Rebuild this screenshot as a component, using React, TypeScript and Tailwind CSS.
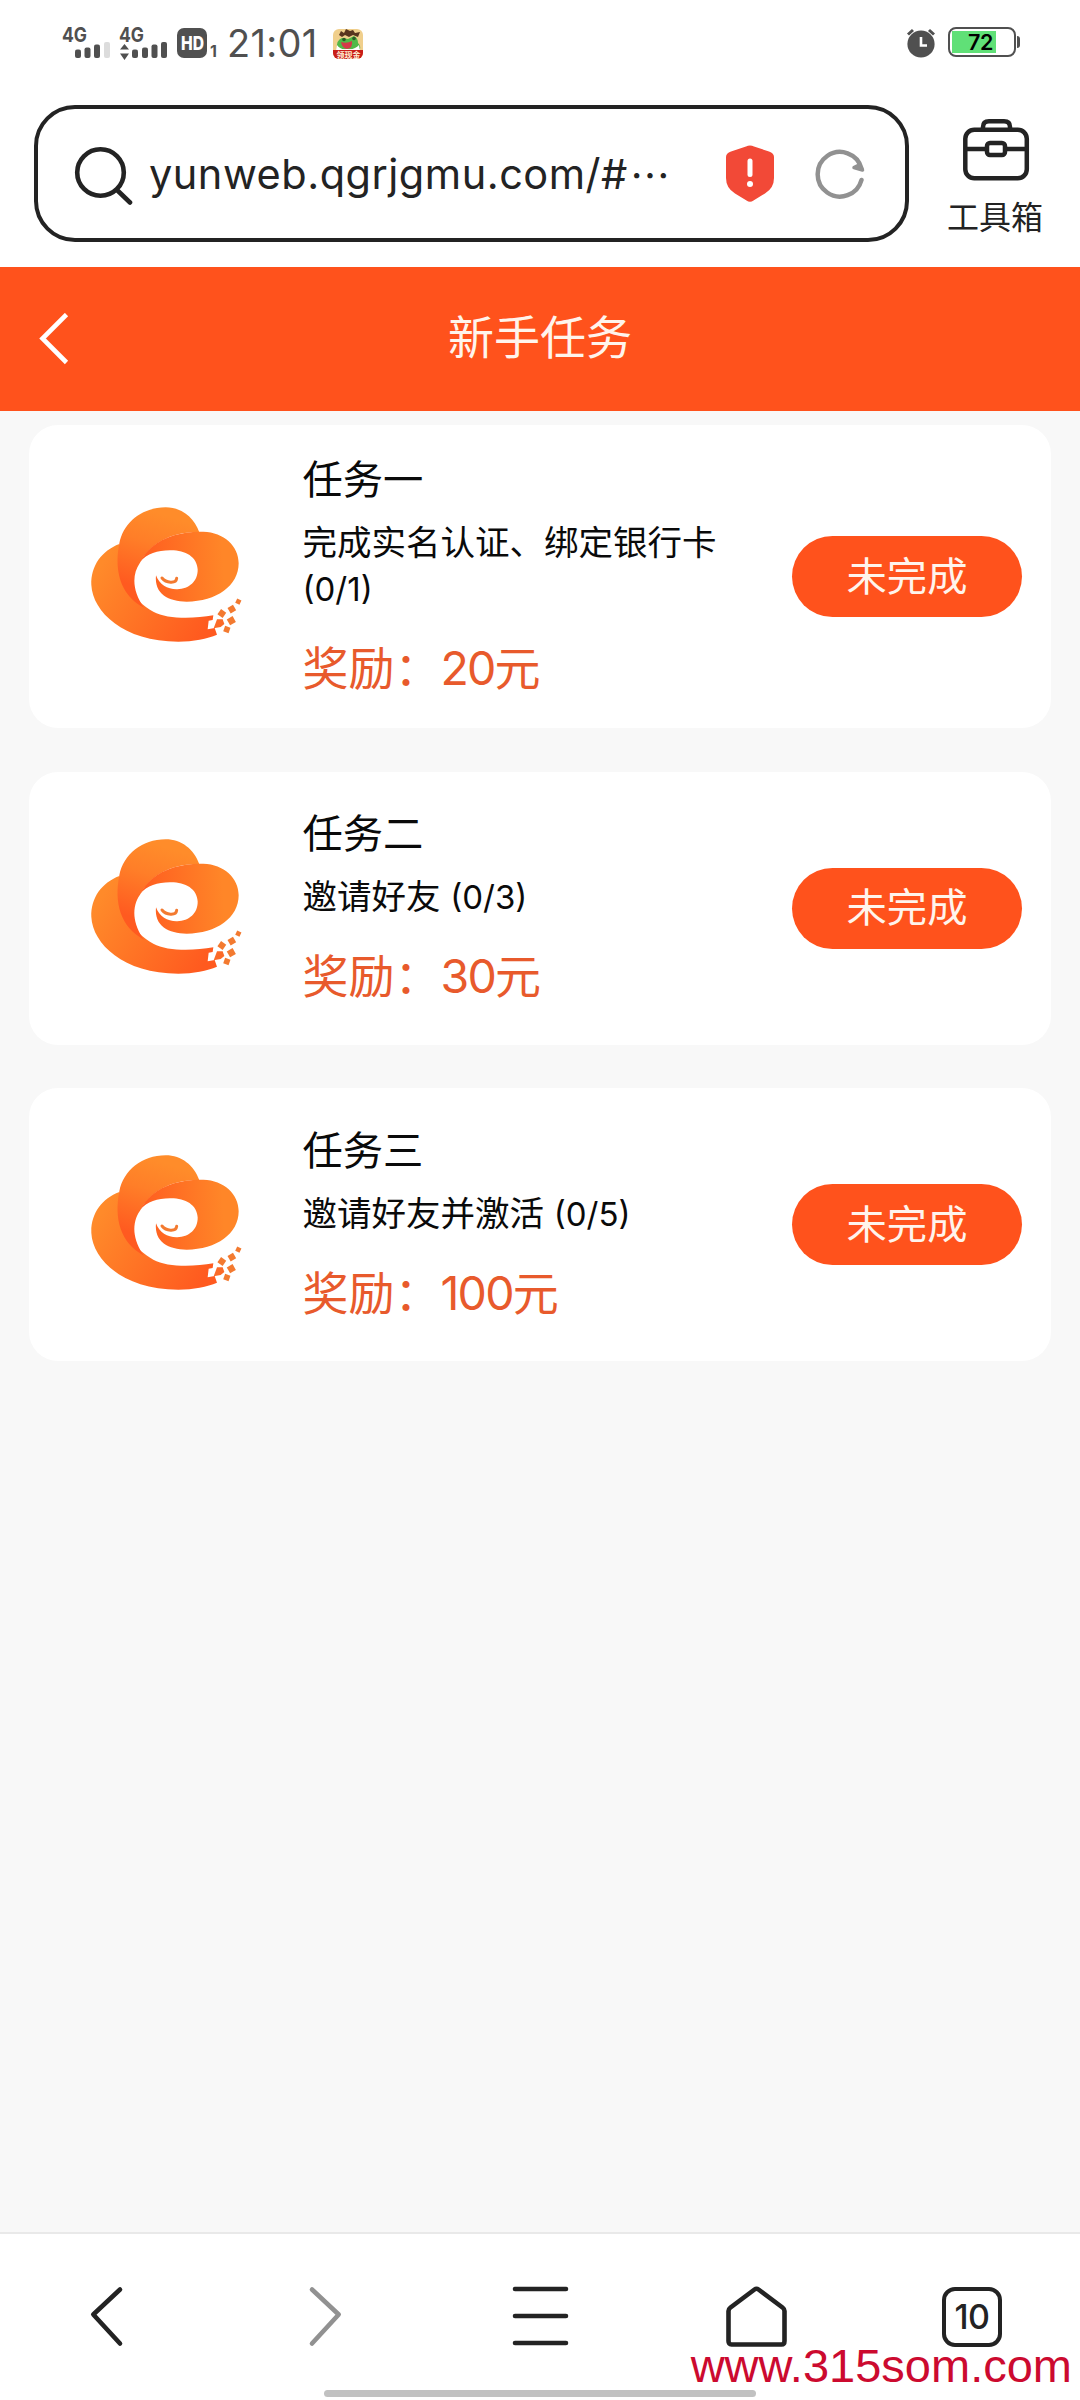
import React from "react";

const CJK = "font-['Inter','Noto_Sans_CJK_SC',sans-serif]";

function Logo() {
  return (
    <svg viewBox="0 0 570 510" className="h-[170px] w-[190px] shrink-0" aria-hidden="true">
      <defs>
        <linearGradient id="swoosh" gradientUnits="userSpaceOnUse" x1="90" y1="230" x2="400" y2="430">
          <stop offset="0" stopColor="#ff8a2a" />
          <stop offset="1" stopColor="#ff5a1f" />
        </linearGradient>
        <linearGradient id="top" gradientUnits="userSpaceOnUse" x1="270" y1="70" x2="200" y2="290">
          <stop offset="0" stopColor="#ff8c2a" />
          <stop offset="0.4" stopColor="#ff7e28" />
          <stop offset="1" stopColor="#ff5a20" />
        </linearGradient>
        <linearGradient id="right" gradientUnits="userSpaceOnUse" x1="230" y1="230" x2="460" y2="215">
          <stop offset="0" stopColor="#ff5f20" />
          <stop offset="1" stopColor="#ff8628" />
        </linearGradient>
      </defs>
      <path fill="url(#swoosh)" d="M148 162C95 182 62 228 64 285C68 365 160 455 325 455C370 455 412 446 441 434L434 414L413 418L416 392L428 390L430 376C370 386 292 388 250 365C190 330 140 270 148 162Z" />
      <path fill="url(#top)" d="M148 160C160 98 215 52 287 52C335 52 372 82 388 127C310 124 245 155 210 218C184 255 188 305 222 353C150 315 132 240 148 160Z" />
      <path fill="url(#right)" d="M210 216C248 148 315 125 400 125C462 127 506 168 506 220C506 287 440 335 350 335C296 335 252 312 258 256C268 284 294 299 322 298C357 297 384 274 383 238C381 200 345 180 300 181C262 182 232 190 210 216Z" />
      <path fill="none" stroke="#f37a30" strokeWidth="9" strokeLinecap="round" d="M276 264C288 279 318 282 320 265" />
      <g fill="#f37a30">
        <rect x="446" y="361" width="19" height="19" transform="rotate(35 455.500 370.500)" />
        <rect x="476" y="348" width="19" height="19" transform="rotate(-30 485.500 357.500)" />
        <rect x="498" y="328" width="14" height="14" transform="rotate(25 505 335)" />
        <rect x="474" y="382" width="20" height="20" transform="rotate(-30 484 392)" />
        <rect x="462" y="410" width="17" height="17" transform="rotate(20 470.500 418.500)" />
        <path fill="#fb6a28" d="M441 388L458 388L463 402L452 411L431 415Z" />
      </g>
    </svg>
  );
}

type Task = { title: string; desc: string; progress: string; reward: string; height: string };

const tasks: Task[] = [
  { title: "任务一", desc: "完成实名认证、绑定银行卡", progress: "(0/1)", reward: "20", height: "h-[303px]" },
  { title: "任务二", desc: "邀请好友", progress: "(0/3)", reward: "30", height: "h-[273px]" },
  { title: "任务三", desc: "邀请好友并激活", progress: "(0/5)", reward: "100", height: "h-[273px]" },
];

function TaskCard({ title, desc, progress, reward, height }: Task) {
  return (
    <section className={`flex items-center rounded-[29px] bg-white pr-[29px] pl-[41px] ${height}`}>
      <div className="-mt-[3px]">
        <Logo />
      </div>
      <div className="-mt-[3px] ml-[42.500px] flex w-[430px] flex-col">
        <h2 className="mt-px text-[40.3px] leading-[54px] text-[#0a0a0a]">{title}</h2>
        <p className="mt-[13px] text-[34.5px] leading-[46px] text-[#0a0a0a]">
          {desc} <span className="text-[33px]">{progress}</span>
        </p>
        <p className="mt-[25px] text-[46px] leading-[62px] text-[#e85a2c]">
          奖励：<span className="text-[46.500px] tracking-[-1.8px]">{reward}</span>元
        </p>
      </div>
      <button className="ml-auto h-[81px] w-[230px] rounded-full bg-[#ff521c] text-[40.3px] leading-[80px] text-[#fff4ec]">
        未完成
      </button>
    </section>
  );
}

function StatusBar() {
  return (
    <div className="flex h-[105px] justify-between pr-[60px] pl-[62px] text-[#505050]">
      <div className="flex">
        <svg viewBox="-1 0 150 60" className="mt-[15px] h-[60px] w-[150px]">
          <g fill="#505050" fontFamily="Inter" fontWeight="700" fontSize="20">
            <text x="-1" y="27" textLength="25" lengthAdjust="spacingAndGlyphs">4G</text>
            <text x="56" y="27" textLength="25" lengthAdjust="spacingAndGlyphs">4G</text>
            <rect x="12" y="34.500" width="6" height="8.500" rx="2" />
            <rect x="21.500" y="32.500" width="6" height="10.500" rx="2" />
            <rect x="31" y="29.500" width="6" height="13.500" rx="2" />
            <rect x="41" y="27" width="6" height="16" rx="2" fill="#dcdcdc" />
            <path d="M57 34.500L61.500 29L66 34.500ZM57 38.500L61.500 45L66 38.500Z" />
            <rect x="69" y="34.500" width="6" height="8.500" rx="2" />
            <rect x="79" y="32.500" width="6" height="10.500" rx="2" />
            <rect x="88.500" y="29.500" width="6" height="13.500" rx="2" />
            <rect x="98" y="27" width="6" height="16" rx="2" />
            <rect x="114" y="13" width="30" height="30" rx="7" />
          </g>
          <text x="118" y="35" fill="#fff" fontFamily="Inter" fontWeight="800" fontSize="19" textLength="23" lengthAdjust="spacingAndGlyphs">HD</text>
        </svg>
        <span className="mt-[41px] -ml-[2px] w-[16px] font-['Inter'] text-[16px] leading-[20px] font-bold">1</span>
        <span className="mt-[20px] ml-px font-['Inter'] text-[38px] leading-[46px] tracking-[0.3px]">21:01</span>
      </div>
      <div className="mt-[27px] mr-auto ml-[15px]">
        <svg viewBox="0 0 30 30" className="mt-[2px] h-[30px] w-[30px]">
          <clipPath id="app"><rect width="30" height="30" rx="6" /></clipPath>
          <g clipPath="url(#app)">
            <rect width="30" height="30" fill="#f0cf8c" />
            <path d="M4 20Q3 11 9 9L15 10L21 7Q25 9 25 14Q28 17 27 20Z" fill="#52b947" />
            <path d="M6 6L8 2L11 4L13 0L17 2L20 1L22 4L27 3L25 8L20 6L16 8L12 6L9 8Z" fill="#59351f" />
            <circle cx="11" cy="10.500" r="1.800" fill="#2c5c28" />
            <circle cx="21" cy="9.500" r="1.800" fill="#2c5c28" />
            <path d="M4 16Q7 21 14 20Q22 21 26 16L27 22H3Z" fill="#fff" />
            <path d="M8 13Q14 15 19 12Q20 19 14 20Q9 19 8 13Z" fill="#d43a48" />
            <rect y="21" width="30" height="9" fill="#c91d18" />
            <text x="3.500" y="28.500" fontSize="8" fontWeight="700" fill="#fff3d8" fontFamily="Noto Sans CJK SC">领现金</text>
          </g>
        </svg>
      </div>
      <div className="flex">
        <svg viewBox="0 0 30 32" className="mt-[28px] h-[32px] w-[30px]">
          <circle cx="15" cy="16" r="13.600" fill="#505050" />
          <path d="M2 6.500L7 2M28 6.500L23 2" stroke="#505050" strokeWidth="3" />
          <path d="M15 9V17.500H21" stroke="#fff" strokeWidth="2.600" fill="none" />
        </svg>
        <div className="mt-[27px] ml-[12px] flex h-[30px] w-[68px] rounded-[8px] border-2 border-[#505050] p-[2px]">
          <div className="h-[22px] w-[44px] bg-[#60e077] pl-[16px] font-['Inter'] text-[21.500px] leading-[22px] font-semibold tracking-[-0.5px] text-black">
            72
          </div>
        </div>
        <div className="mt-[36px] ml-px h-[12px] w-[3px] rounded-r-sm bg-[#505050]" />
      </div>
    </div>
  );
}

function AddressBar() {
  return (
    <div className="flex h-[162px] pl-[34px]">
      <div className="flex h-[137px] w-[875px] items-center rounded-[41px] border-[4.500px] border-[#232323] pl-[36px] text-[#232323]">
        <svg viewBox="0 0 60 62" className="h-[62px] w-[60px]" fill="none" stroke="#232323" strokeWidth="4.600" strokeLinecap="round">
          <circle cx="26.500" cy="29.500" r="23.300" />
          <path d="M43 47L56 59.500" />
        </svg>
        <span className="ml-[15px] w-[481px] font-['Inter'] text-[41.500px] leading-[50px] tracking-[0.500px] whitespace-nowrap">
          yunweb.qgrjgmu.com/#
        </span>
        <span className="w-[40px] font-['Noto_Sans_CJK_SC'] text-[40px] leading-[50px]">…</span>
        <svg viewBox="0 0 48 57" className="ml-[56px] h-[57px] w-[48px]">
          <path d="M20 1.500Q24 -0.500 28 1.500L43 6.500Q48 8 48 12V33Q48 43 39 48.500L27.500 55.500Q24 58 20.500 55.500L9 48.500Q0 43 0 33V12Q0 8 5 6.500Z" fill="#f24937" />
          <path d="M24 16V29.500" stroke="#fff" strokeWidth="5" strokeLinecap="round" />
          <circle cx="24" cy="39" r="3" fill="#fff" />
        </svg>
        <svg viewBox="0 0 52 52" className="ml-[40px] h-[52px] w-[52px]" fill="none" stroke="#919191" strokeWidth="4.500" strokeLinecap="round" strokeLinejoin="round">
          <path d="M47.500 32A22.300 22.300 0 1 1 47.500 20.500" />
          <path d="M48.500 22L40 19.500L45 17Z" fill="#919191" strokeWidth="3.500" />
        </svg>
      </div>
      <div className="ml-[37px] flex w-[100px] flex-col items-center">
        <svg viewBox="0 0 68 64" className="mt-[13px] h-[64px] w-[68px] shrink-0" fill="none" stroke="#232323" strokeWidth="4.500">
          <rect x="3.300" y="11.800" width="61.500" height="48.500" rx="9" />
          <path d="M21 11V9Q21 3.300 27 3.300H42Q48 3.300 48 9V11" />
          <path d="M3 31H25M43 31H65" />
          <rect x="25" y="25" width="18" height="12" rx="3" />
        </svg>
        <span className="mt-[12px] mr-[2px] text-[32px] leading-[48px] text-[#232323]">工具箱</span>
      </div>
    </div>
  );
}

function BottomNav() {
  return (
    <nav className="flex h-[168px] flex-col border-t-2 border-[#e9e9e9] bg-white">
      <div className="flex h-[156px] items-start justify-between pt-[49px] pr-[77px] pl-[75px]">
        <svg viewBox="0 0 64 64" className="h-[64px] w-[64px]" fill="none" stroke="#232323" strokeWidth="4.600" strokeLinecap="round" strokeLinejoin="round">
          <path d="M45 6.500L18.300 31.500L45 60.500" />
        </svg>
        <svg viewBox="0 0 64 64" className="h-[64px] w-[64px]" fill="none" stroke="#919191" strokeWidth="4.600" strokeLinecap="round" strokeLinejoin="round">
          <path d="M20 6.500L46.700 31.500L20 60.500" />
        </svg>
        <svg viewBox="0 0 64 64" className="h-[64px] w-[64px]" fill="none" stroke="#232323" strokeWidth="4.600" strokeLinecap="round">
          <path d="M6 6H57M6 33H57M6 60H57" />
        </svg>
        <svg viewBox="0 0 64 64" className="h-[64px] w-[64px]" fill="none" stroke="#232323" strokeWidth="4.600" strokeLinejoin="round">
          <path d="M3.500 28Q3.500 26 5.500 24.500L29.500 6.500Q31.500 5 33.500 6.500L57.500 24.500Q59.500 26 59.500 28V58Q59.500 61.500 56.500 61.500H6.500Q3.500 61.500 3.500 58Z" />
        </svg>
        <div className="mt-[4px] mr-px flex h-[60px] w-[60px] items-center justify-center rounded-[13px] border-4 border-[#232323] font-['Inter'] text-[34px] leading-[40px] font-medium tracking-[-0.5px] text-[#232323]">
          10
        </div>
      </div>
      <div className="mx-auto h-[7px] w-[432px] rounded-full bg-[#c1c1c1]" />
    </nav>
  );
}

export default function App() {
  return (
    <div className={`relative flex h-[2400px] w-[1080px] flex-col overflow-hidden bg-white ${CJK}`}>
      <StatusBar />
      <AddressBar />
      <header className="flex h-[144px] items-center bg-[#ff521c] px-[38px]">
        <svg viewBox="0 0 32 52" className="-mt-px h-[52px] w-[32px]" fill="none" stroke="#fff" strokeWidth="4.600">
          <path d="M28.500 1.500L4.500 25.500L28.500 49.500" />
        </svg>
        <h1 className="-mt-[4px] mr-[32px] flex-1 text-center text-[46px] leading-[62px] text-[#fff4ec]">新手任务</h1>
      </header>
      <main className="flex flex-1 flex-col gap-[43.500px] bg-[#f8f8f8] px-[29px] pt-[14px]">
        {tasks.map((t) => (
          <TaskCard key={t.title} {...t} />
        ))}
      </main>
      <BottomNav />
      <span className="absolute right-[8px] bottom-[7px] font-['Liberation_Sans'] text-[47px] leading-[54px] text-[#cc0a2f]">
        www.315som.com
      </span>
    </div>
  );
}
